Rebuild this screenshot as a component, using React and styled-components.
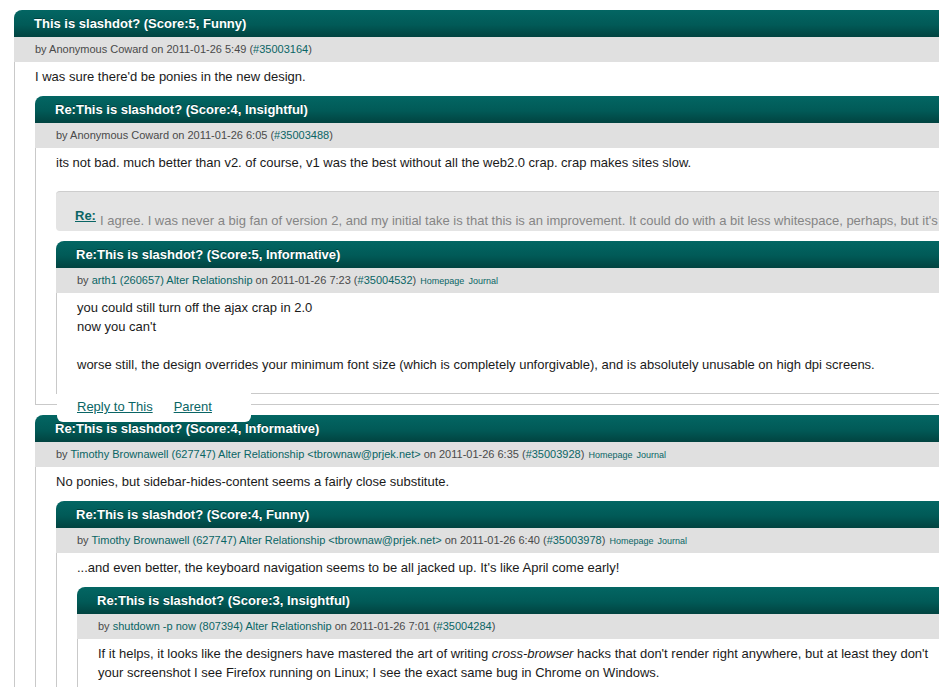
import React from "react";
import styled, { createGlobalStyle } from "styled-components";

const GlobalStyle = createGlobalStyle`
  html, body {
    margin: 0;
    padding: 0;
    background: #ffffff;
    overflow: hidden;
  }
  body {
    font-family: "Liberation Sans", Arial, Helvetica, sans-serif;
    color: #1c1c1c;
  }
`;

const TEAL = "#0a6565";

const Page = styled.div`
  width: 1160px;
  padding: 10px 0 0 14px;
`;

const CommentBox = styled.div`
  position: relative;
  margin-bottom: ${(p) => (p.$nested ? "10px" : "0")};
`;

const Header = styled.h4`
  margin: 0;
  height: 27px;
  line-height: 27px;
  padding-left: 20px;
  border-radius: 8px 8px 0 0;
  background: linear-gradient(to bottom, #036663 0%, #015a57 55%, #014340 100%);
  color: #ffffff;
  font-size: 13px;
  font-weight: bold;
  text-shadow: 0 -1px 0 rgba(0, 0, 0, 0.35);
  white-space: nowrap;
`;

const Meta = styled.div`
  height: 25px;
  line-height: 25px;
  padding-left: 21px;
  background: #e0e0e0;
  color: #4a4a4a;
  font-size: 11px;
  white-space: nowrap;
`;

const MetaLink = styled.a`
  color: ${TEAL};
  text-decoration: none;
`;

const Journal = styled.a`
  color: ${TEAL};
  text-decoration: none;
  font-size: 9px;
  margin-left: 1px;
`;

const Body = styled.div`
  border-left: 1px solid #c9c9c9;
  border-bottom: 1px solid #c9c9c9;
  padding: 5px 0 ${(p) => (p.$leaf ? "9px" : "0")} 20px;
`;

const Text = styled.div`
  margin-bottom: 10px;
  font-size: 13px;
  line-height: 19px;
  color: #1a1a1a;
  white-space: nowrap;
`;

const QuoteBar = styled.div`
  margin: 19px 0 10px;
  height: 40px;
  box-sizing: border-box;
  padding: 14px 0 0 19px;
  border-top: 1px solid #cdcdcd;
  border-radius: 4px;
  background: #e4e4e4;
  font-size: 13px;
  line-height: 19px;
  white-space: nowrap;
  overflow: hidden;
`;

const QuoteRe = styled.a`
  color: ${TEAL};
  font-weight: bold;
  text-decoration: underline;
  vertical-align: 5px;
  margin-right: 4px;
`;

const QuoteText = styled.span`
  color: #858585;
`;

const LinksTab = styled.div`
  position: absolute;
  top: calc(100% - 1px);
  left: 1px;
  z-index: 2;
  width: 194px;
  height: 29px;
  box-sizing: border-box;
  padding: 4px 0 0 20px;
  background: #ffffff;
  border-radius: 0 0 6px 6px;
  font-size: 13px;
  line-height: 19px;
  white-space: nowrap;
`;

const TabLink = styled.a`
  color: ${TEAL};
  text-decoration: underline;
  & + & {
    margin-left: 21px;
  }
`;

const Id = ({ id }) => (
  <>
    (<MetaLink href="#">#{id}</MetaLink>)
  </>
);

function Comment({ title, meta, text, quote, children, links, nested = true }) {
  const kids = React.Children.toArray(children);
  const leaf = kids.length === 0 && !quote;
  return (
    <CommentBox $nested={nested}>
      <Header>{title}</Header>
      <Meta>{meta}</Meta>
      <Body $leaf={leaf}>
        <Text>{text}</Text>
        {quote && (
          <QuoteBar>
            <QuoteRe href="#">Re:</QuoteRe>
            <QuoteText>{quote}</QuoteText>
          </QuoteBar>
        )}
        {kids}
      </Body>
      {links && (
        <LinksTab>
          <TabLink href="#">Reply to This</TabLink>
          <TabLink href="#">Parent</TabLink>
        </LinksTab>
      )}
    </CommentBox>
  );
}

export default function App() {
  return (
    <>
      <GlobalStyle />
      <Page>
        <Comment
          nested={false}
          title="This is slashdot? (Score:5, Funny)"
          meta={
            <>
              by Anonymous Coward on 2011-01-26 5:49 <Id id="35003164" />
            </>
          }
          text="I was sure there'd be ponies in the new design."
        >
          <Comment
            title="Re:This is slashdot? (Score:4, Insightful)"
            meta={
              <>
                by Anonymous Coward on 2011-01-26 6:05 <Id id="35003488" />
              </>
            }
            text="its not bad. much better than v2. of course, v1 was the best without all the web2.0 crap. crap makes sites slow."
            quote="I agree. I was never a big fan of version 2, and my initial take is that this is an improvement. It could do with a bit less whitespace, perhaps, but it's a step in the right direction."
          >
            <Comment
              links
              title="Re:This is slashdot? (Score:5, Informative)"
              meta={
                <>
                  by <MetaLink href="#">arth1 (260657)</MetaLink>{" "}
                  <MetaLink href="#">Alter Relationship</MetaLink> on 2011-01-26 7:23{" "}
                  <Id id="35004532" /> <Journal href="#">Homepage</Journal>{" "}
                  <Journal href="#">Journal</Journal>
                </>
              }
              text={
                <>
                  you could still turn off the ajax crap in 2.0
                  <br />
                  now you can't
                  <br />
                  <br />
                  worse still, the design overrides your minimum font size (which is completely
                  unforgivable), and is absolutely unusable on high dpi screens.
                </>
              }
            />
          </Comment>
          <Comment
            title="Re:This is slashdot? (Score:4, Informative)"
            meta={
              <>
                by <MetaLink href="#">Timothy Brownawell (627747)</MetaLink>{" "}
                <MetaLink href="#">Alter Relationship</MetaLink>{" "}
                <MetaLink href="#">&lt;tbrownaw@prjek.net&gt;</MetaLink> on 2011-01-26 6:35{" "}
                <Id id="35003928" /> <Journal href="#">Homepage</Journal>{" "}
                <Journal href="#">Journal</Journal>
              </>
            }
            text="No ponies, but sidebar-hides-content seems a fairly close substitute."
          >
            <Comment
              title="Re:This is slashdot? (Score:4, Funny)"
              meta={
                <>
                  by <MetaLink href="#">Timothy Brownawell (627747)</MetaLink>{" "}
                  <MetaLink href="#">Alter Relationship</MetaLink>{" "}
                  <MetaLink href="#">&lt;tbrownaw@prjek.net&gt;</MetaLink> on 2011-01-26 6:40{" "}
                  <Id id="35003978" /> <Journal href="#">Homepage</Journal>{" "}
                  <Journal href="#">Journal</Journal>
                </>
              }
              text="...and even better, the keyboard navigation seems to be all jacked up. It's like April come early!"
            >
              <Comment
                title="Re:This is slashdot? (Score:3, Insightful)"
                meta={
                  <>
                    by <MetaLink href="#">shutdown -p now (807394)</MetaLink>{" "}
                    <MetaLink href="#">Alter Relationship</MetaLink> on 2011-01-26 7:01{" "}
                    <Id id="35004284" />
                  </>
                }
                text={
                  <>
                    If it helps, it looks like the designers have mastered the art of writing{" "}
                    <i>cross-browser</i> hacks that don't render right anywhere, but at least they
                    don't
                    <br />
                    your screenshot I see Firefox running on Linux; I see the exact same bug in
                    Chrome on Windows.
                  </>
                }
              />
            </Comment>
          </Comment>
        </Comment>
      </Page>
    </>
  );
}
